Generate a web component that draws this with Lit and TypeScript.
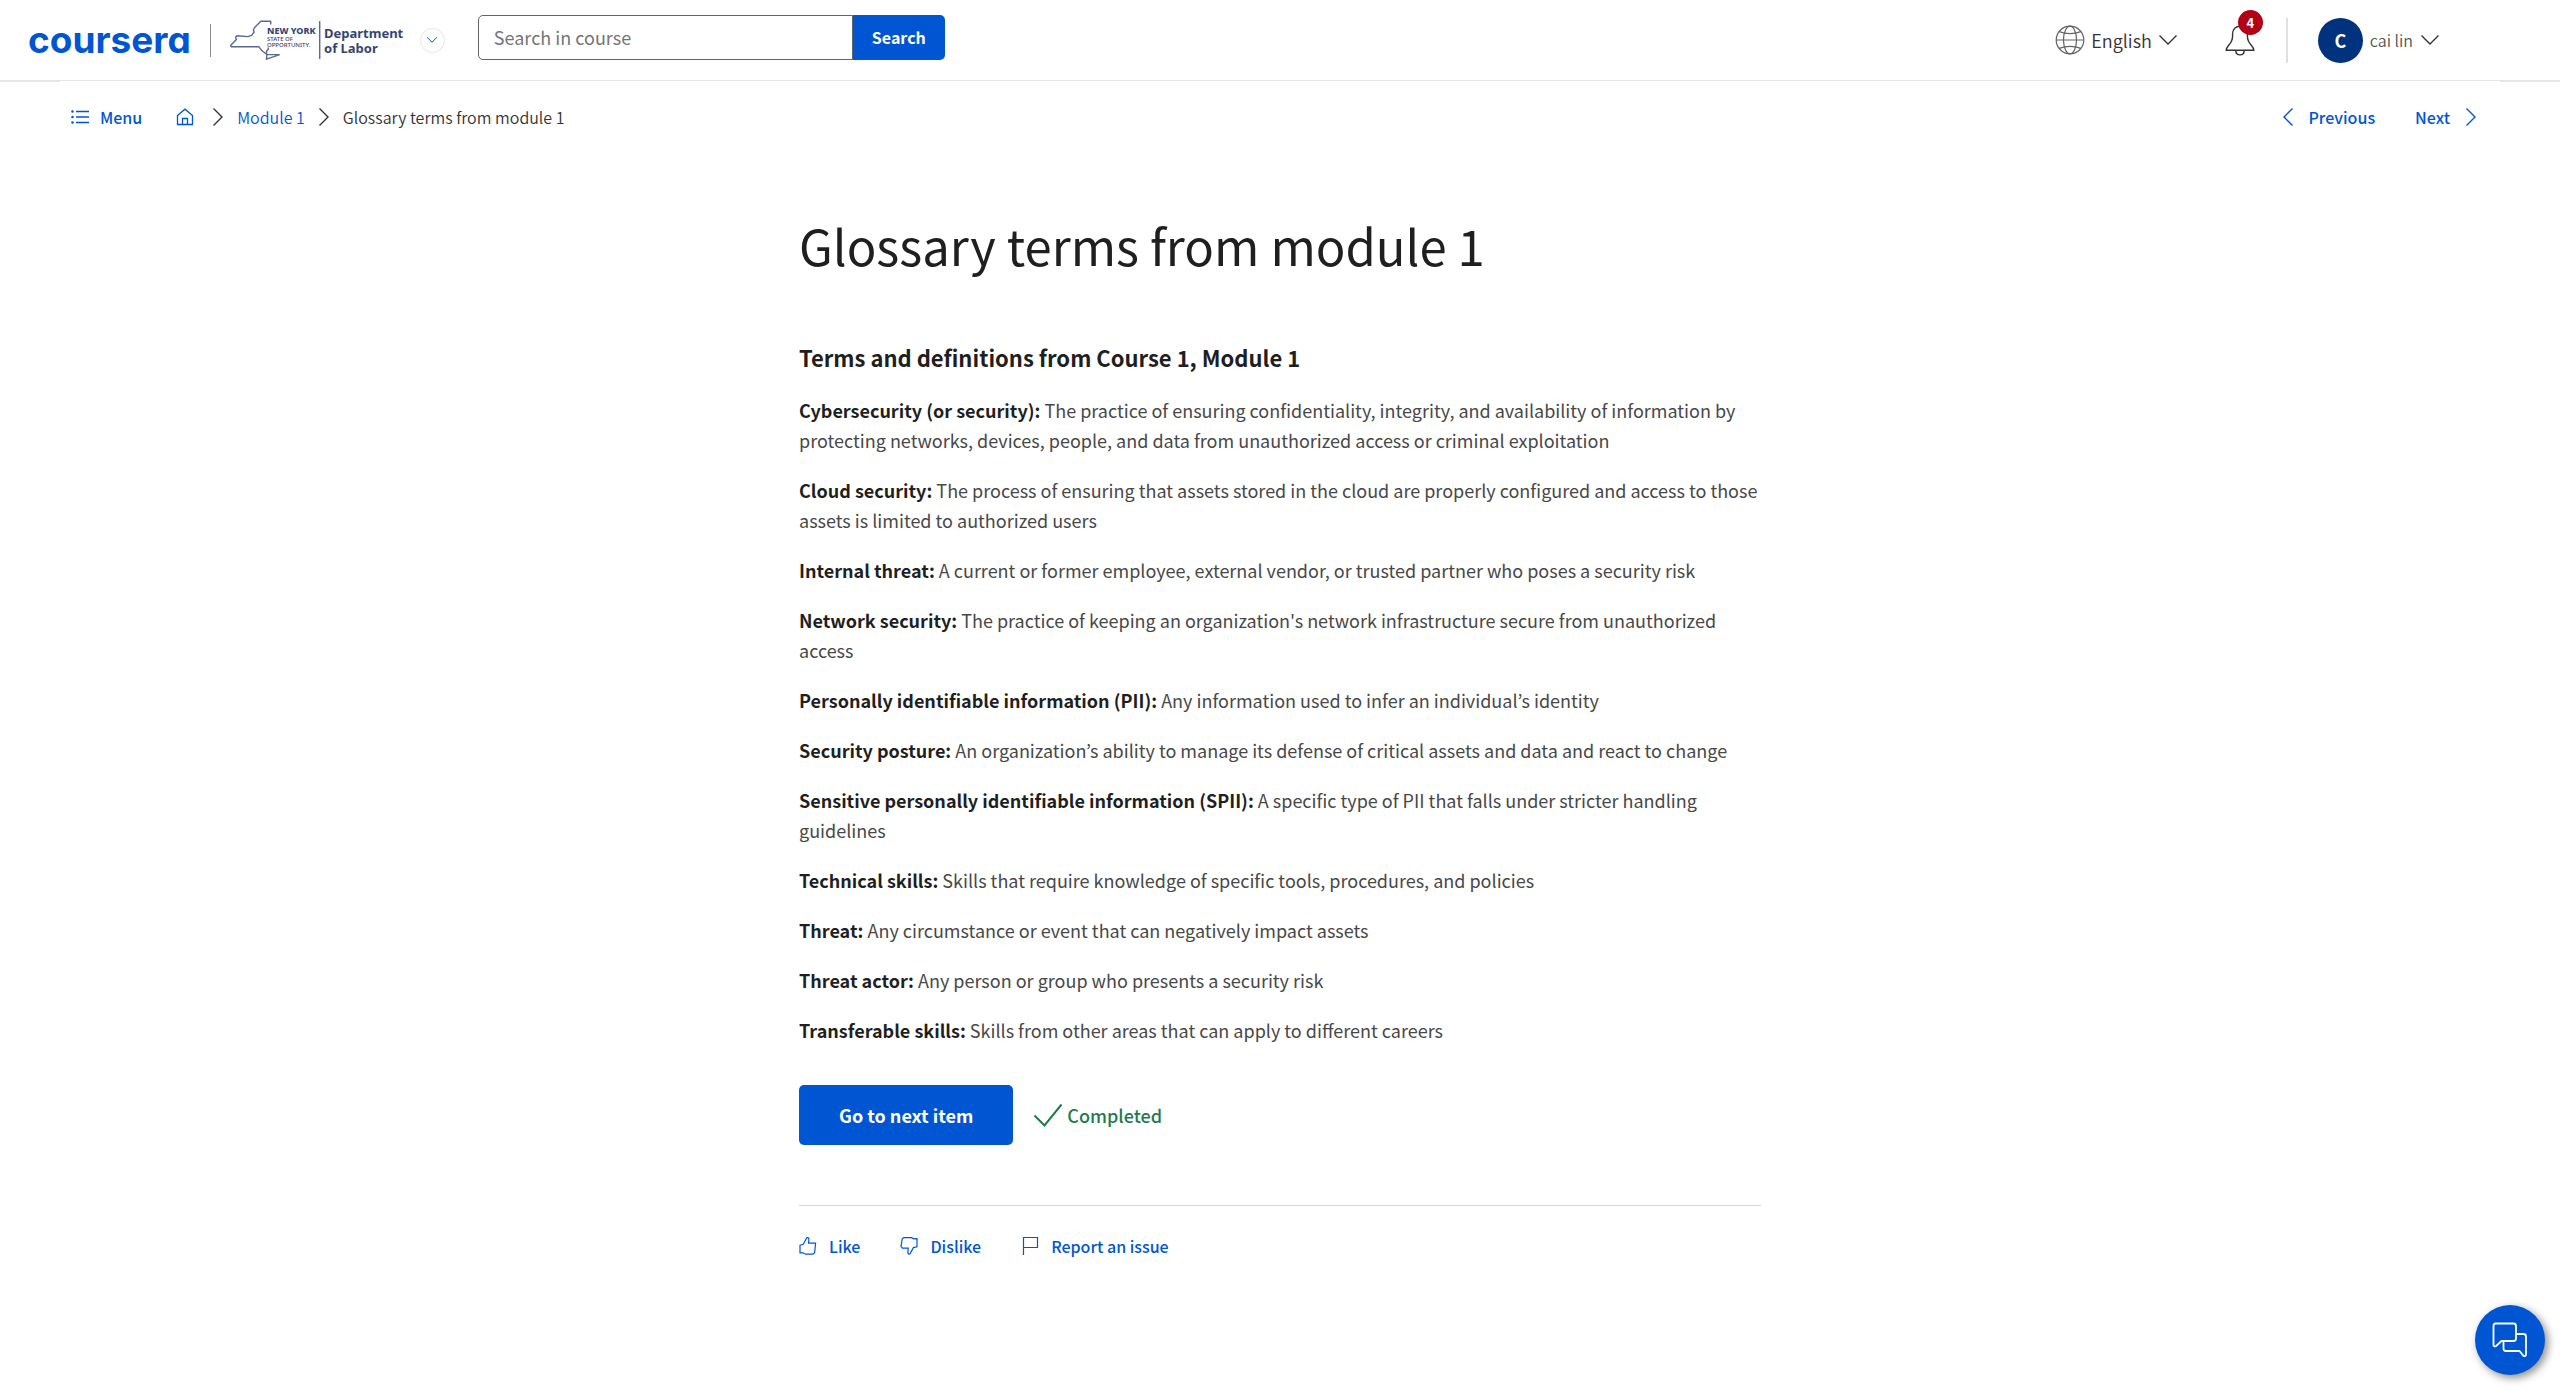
import { LitElement, html, css, svg } from "lit";
import { customElement, property } from "lit/decorators.js";

interface Term {
  name: string;
  text: string;
}

const TERMS: Term[] = [
  { name: "Cybersecurity (or security):", text: "The practice of ensuring confidentiality, integrity, and availability of information by protecting networks, devices, people, and data from unauthorized access or criminal exploitation" },
  { name: "Cloud security:", text: "The process of ensuring that assets stored in the cloud are properly configured and access to those assets is limited to authorized users" },
  { name: "Internal threat:", text: "A current or former employee, external vendor, or trusted partner who poses a security risk" },
  { name: "Network security:", text: "The practice of keeping an organization's network infrastructure secure from unauthorized access" },
  { name: "Personally identifiable information (PII):", text: "Any information used to infer an individual’s identity" },
  { name: "Security posture:", text: "An organization’s ability to manage its defense of critical assets and data and react to change" },
  { name: "Sensitive personally identifiable information (SPII):", text: "A specific type of PII that falls under stricter handling guidelines" },
  { name: "Technical skills:", text: "Skills that require knowledge of specific tools, procedures, and policies" },
  { name: "Threat:", text: "Any circumstance or event that can negatively impact assets" },
  { name: "Threat actor:", text: "Any person or group who presents a security risk" },
  { name: "Transferable skills:", text: "Skills from other areas that can apply to different careers" },
];

// Each icon: its natural width and height, stroke width and line art.
const ICONS: Record<string, { w: number; h: number; s: number; art: unknown }> = {
  menu: { w: 20, h: 16, s: 1.3, art: svg`<path d="M6 2.5H19M6 8H19M6 13.5H19"/><path stroke-width="2.6" stroke-linecap="round" d="M2.5 2.5h.01M2.5 8h.01M2.5 13.5h.01"/>` },
  home: { w: 18, h: 18, s: 1.3, art: svg`<path d="M1.5 7.5L9 1.2L16.5 7.5V16.5H1.5Z"/><path d="M6.5 16.5V10.5H11.5V16.5"/>` },
  right: { w: 12, h: 20, s: 1.4, art: svg`<path d="M1.5 1.5L10 10L1.5 18.5"/>` },
  left: { w: 12, h: 20, s: 1.4, art: svg`<path d="M10.5 1.5L2 10L10.5 18.5"/>` },
  down: { w: 20, h: 12, s: 1.4, art: svg`<path d="M1.5 1.5L10 10L18.5 1.5"/>` },
  downSmall: { w: 12, h: 8, s: 1, art: svg`<path d="M1 1.2L6 6.2L11 1.2"/>` },
  globe: { w: 30, h: 30, s: 1.2, art: svg`<circle cx="15" cy="15" r="13.8"/><ellipse cx="15" cy="15" rx="6.5" ry="13.8"/><path d="M1.2 15H28.8M4.2 6.6Q15 10.6 25.8 6.6M4.2 23.4Q15 19.4 25.8 23.4"/>` },
  bell: { w: 30, h: 32, s: 1.4, art: svg`<path d="M1.2 26.3C1.2 21.5 7.6 20.5 7.6 12V9.5C7.6 5.2 10.8 2.2 15 2.2S22.4 5.2 22.4 9.5V12C22.4 20.5 28.8 21.5 28.8 26.3Z"/><path d="M10.8 26.5C10.8 32.3 19.2 32.3 19.2 26.5"/>` },
  check: { w: 30, h: 24, s: 2, art: svg`<path d="M1.5 12.5L11.5 22.5L28.5 1.5"/>` },
  like: { w: 18, h: 20, s: 1.2, art: svg`<path d="M1 9.2L4.2 8.2L7.4 2.6C7.8 1.2 9.8 1.4 9.9 3L9.5 7.2H16.6L15.6 16.6L13.8 18.2H6.6L4 16.8H1Z"/>` },
  dislike: { w: 18, h: 20, s: 1.2, art: svg`<path d="M17 2.6L14 2.8L11.4 1.6H3.6L2.2 3L1 10.4L2.4 12.2H8.2L7.9 16.6C8 18.4 9.9 18.6 10.4 17.2L13.4 11.6L17 10.8Z"/>` },
  flag: { w: 18, h: 20, s: 1.2, art: svg`<path d="M2.5 19V1.5H16.5V11.5H2.5"/>` },
  chat: { w: 36, h: 36, s: 1.8, art: svg`<path stroke-linejoin="round" d="M3.5 1.5H21.5Q24 1.5 24 4V16.5Q24 19 21.5 19H9.5L4 24.2Q1.5 25 1.5 23V4Q1.5 1.5 3.5 1.5Z"/><path stroke-linejoin="round" d="M24 12H31.5Q34 12 34 14.5V32.5Q33.5 35 31.5 33.8L27.5 29H14Q11.5 29 11.5 26.5V19"/>` },
};

@customElement("line-icon")
export class LineIcon extends LitElement {
  @property() name = "right";

  static styles = css`
    :host { display: inline-flex; flex: none; }
    svg { display: block; fill: none; stroke: currentColor; }
  `;

  render() {
    const icon = ICONS[this.name];
    return html`<svg width=${icon.w} height=${icon.h} viewBox="0 0 ${icon.w} ${icon.h}" stroke-width=${icon.s} aria-hidden="true">${icon.art}</svg>`;
  }
}

@customElement("top-bar")
export class TopBar extends LitElement {
  static styles = css`
    :host { display: block; }
    .bar { display: flex; align-items: center; height: 80px; padding: 0 120px 0 28px; border-bottom: 2px solid #e5e5e5; }
    a { color: inherit; text-decoration: none; }
    button, input { font: inherit; margin: 0; padding: 0; border: 0; background: none; color: inherit; }
    button { cursor: pointer; }
    .logo { font: 700 37px/36px Inter, sans-serif; font-feature-settings: "cv11"; color: #0056d2; }
    .rule { width: 1px; height: 33px; margin: 0 17px 0 19px; background: #8a8a8a; }
    .partner { display: block; }
    .partner text { font-family: "Noto Sans", sans-serif; fill: #36456f; }
    .partner .state { font-size: 9px; font-weight: 800; }
    .partner .motto { font-size: 6px; font-weight: 500; }
    .partner .dept { font-size: 13px; font-weight: 700; }
    .pick { display: flex; align-items: center; justify-content: center; width: 25px; height: 25px; margin-left: 12px; border: 1px solid #e5e5e5; border-radius: 50%; color: #0056d2; }
    .search { display: flex; height: 45px; margin: 0 auto 6px 33px; }
    .search input { box-sizing: border-box; width: 375px; padding: 0 15px; border: 1px solid #636363; border-radius: 5px 0 0 5px; font-size: 18px; color: #1f1f1f; outline: none; }
    .search input::placeholder { color: #757575; opacity: 1; }
    .search button { width: 92px; border-radius: 0 5px 5px 0; background: #0056d2; color: #fff; font-size: 16px; font-weight: 700; }
    .lang { display: flex; align-items: center; gap: 6px; font-size: 18px; font-weight: 350; color: #333; }
    .bell { position: relative; display: flex; margin: 0 31px 0 47px; color: #333; }
    .badge { position: absolute; left: 13px; top: -14px; width: 25px; height: 25px; border-radius: 50%; background: #b30016; color: #fff; font-size: 13px; line-height: 25px; font-weight: 700; text-align: center; }
    .split { width: 2px; height: 45px; margin-right: 30px; background: #e0e0e0; }
    .user { display: flex; align-items: center; gap: 7px; font-size: 16px; font-weight: 350; color: #555; }
    .avatar { width: 45px; height: 45px; border-radius: 50%; background: #00327d; color: #fff; font-size: 18px; line-height: 45px; font-weight: 700; text-align: center; }
    .globe { color: #636363; }
    .user line-icon { color: #333; }
  `;

  render() {
    return html`
      <header class="bar">
        <a class="logo" href="#">coursera</a>
        <span class="rule"></span>
        <svg class="partner" width="180" height="44" viewBox="0 0 180 44" role="img">
          <path fill="none" stroke="#5b6890" stroke-width="1.4" stroke-linejoin="round" d="M42.7 6.5V3.2H32.8L26.6 9.6L25.3 12L26.2 14L23.5 17.4L20 18.6L9 17.8L7.6 19L8.4 21.6L2.6 27.6L3.4 28.8H31L33.4 32.2L38.6 36.2V33L40.2 31.5V29.5M39 36L38.4 41.2L51.2 36.8L39 36.4"/>
          <rect x="91" y="3" width="1.4" height="38" fill="#5b6890"/>
          <text class="state" x="39" y="16">NEW YORK</text>
          <text class="motto" x="39" y="23">STATE OF</text>
          <text class="motto" x="39" y="29">OPPORTUNITY.</text>
          <text class="dept" x="96" y="20">Department</text>
          <text class="dept" x="96" y="35">of Labor</text>
        </svg>
        <button class="pick" aria-label="Programs"><line-icon name="downSmall"></line-icon></button>
        <form class="search" @submit=${(e: Event) => e.preventDefault()}>
          <input type="text" placeholder="Search in course" aria-label="Search in course" />
          <button type="submit">Search</button>
        </form>
        <button class="lang"><line-icon class="globe" name="globe"></line-icon><span>English</span><line-icon name="down"></line-icon></button>
        <button class="bell" aria-label="Notifications"><line-icon name="bell"></line-icon><span class="badge">4</span></button>
        <span class="split"></span>
        <button class="user"><span class="avatar">C</span><span>cai lin</span><line-icon name="down"></line-icon></button>
      </header>
    `;
  }
}

@customElement("item-nav")
export class ItemNav extends LitElement {
  static styles = css`
    :host { display: block; }
    .row { position: relative; display: flex; align-items: center; justify-content: space-between; height: 72px; margin: -1px 60px 0; padding: 0 23px 0 10px; background: #fff; font-size: 16px; line-height: 24px; }
    a { color: #0056d2; text-decoration: none; display: flex; align-items: center; }
    button { display: flex; align-items: center; gap: 10px; margin: 0; padding: 0; border: 0; background: none; font: inherit; font-weight: 500; color: #0056d2; cursor: pointer; }
    .crumbs { display: flex; align-items: center; gap: 13px; color: #333; font-weight: 350; }
    .crumbs button { margin-right: 21px; }
    .crumbs a:first-of-type { margin-right: 5px; }
    .steps { display: flex; align-items: center; gap: 40px; }
    .steps a { gap: 15px; font-weight: 500; }
  `;

  render() {
    return html`
      <div class="row">
        <nav class="crumbs">
          <button><line-icon name="menu"></line-icon>Menu</button>
          <a href="#" aria-label="Home"><line-icon name="home"></line-icon></a>
          <line-icon name="right"></line-icon>
          <a href="#">Module 1</a>
          <line-icon name="right"></line-icon>
          <span>Glossary terms from module 1</span>
        </nav>
        <nav class="steps">
          <a href="#"><line-icon name="left"></line-icon>Previous</a>
          <a href="#">Next<line-icon name="right"></line-icon></a>
        </nav>
      </div>
    `;
  }
}

@customElement("app-root")
export class AppRoot extends LitElement {
  static styles = css`
    :host { display: block; min-height: 100vh; background: #fff; color: #1f1f1f; font-family: "Noto Sans CJK KR", "Open Sans", sans-serif; }
    .reading { box-sizing: border-box; max-width: 962px; margin: 0 auto; padding: 50px 0 100px; }
    h1 { margin: 0 0 52px; font-size: 49px; line-height: 84px; font-weight: 400; }
    h2 { margin: 0 0 20px; font-size: 22px; line-height: 36px; font-weight: 700; }
    p { margin: 0 0 20px; font-size: 18px; line-height: 30px; color: #484848; font-weight: 400; }
    strong { font-weight: 700; color: #1f1f1f; }
    .finish { display: flex; align-items: center; gap: 20px; margin-top: 40px; padding-bottom: 60px; border-bottom: 1px solid #dadada; }
    button { margin: 0; border: 0; font: inherit; cursor: pointer; }
    .next { height: 60px; padding: 0 40px; border-radius: 5px; background: #0056d2; color: #fff; font-size: 18px; font-weight: 700; }
    .done { display: flex; align-items: center; gap: 4px; color: #1f7a4d; font-size: 18px; font-weight: 500; }
    .feedback { display: flex; gap: 40px; margin-top: 28px; }
    .feedback button { display: flex; align-items: center; gap: 12px; padding: 0; background: none; color: #0056d2; font-size: 16px; line-height: 24px; font-weight: 500; }
    .chat { position: fixed; right: 15px; bottom: 15px; display: flex; align-items: center; justify-content: center; width: 70px; height: 70px; padding: 0; border-radius: 50%; background: #0056d2; color: #fff; box-shadow: 3px 3px 8px rgba(0, 0, 0, 0.45); }
  `;

  render() {
    return html`
      <top-bar></top-bar>
      <item-nav></item-nav>
      <main class="reading">
        <h1>Glossary terms from module 1</h1>
        <h2>Terms and definitions from Course 1, Module 1</h2>
        ${TERMS.map((t) => html`<p><strong>${t.name}</strong> ${t.text}</p>`)}
        <div class="finish">
          <button class="next">Go to next item</button>
          <span class="done"><line-icon name="check"></line-icon>Completed</span>
        </div>
        <div class="feedback">
          <button><line-icon name="like"></line-icon>Like</button>
          <button><line-icon name="dislike"></line-icon>Dislike</button>
          <button><line-icon name="flag"></line-icon>Report an issue</button>
        </div>
      </main>
      <button class="chat" aria-label="Chat"><line-icon name="chat"></line-icon></button>
    `;
  }
}
